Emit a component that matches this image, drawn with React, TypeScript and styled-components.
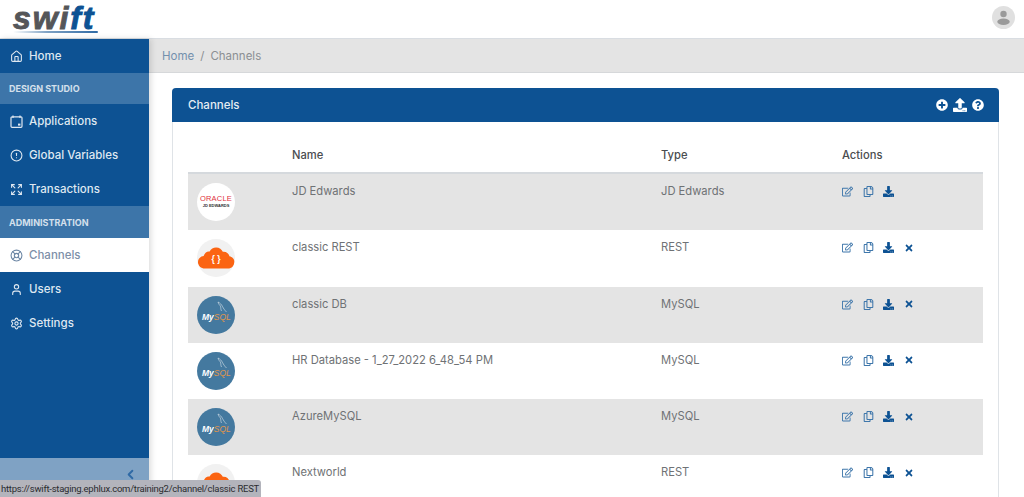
import React from 'react';
import styled, { createGlobalStyle } from 'styled-components';
import { Home, CircleAlert, Expand, LifeBuoy, User, Settings, ChevronLeft } from 'lucide-react';
import { FaRegEdit, FaRegCopy, FaDownload, FaTimes, FaPlusCircle, FaUpload, FaQuestionCircle } from 'react-icons/fa';

const GlobalStyle = createGlobalStyle`
  html, body {
    margin: 0;
    padding: 0;
    height: 100%;
    overflow: hidden;
    font-family: Inter, "Open Sans", sans-serif;
    background: #fff;
  }
  #root { height: 100%; }
`;

const Page = styled.div`
  position: relative;
  height: 497px;
  display: flex;
  flex-direction: column;
  overflow: hidden;
`;

const TopBar = styled.header`
  height: 38px;
  flex: none;
  display: flex;
  align-items: flex-start;
  justify-content: space-between;
  padding: 0 9px 0 13px;
  border-bottom: 1px solid #d9dde2;
  background: #fff;
`;

const Logo = styled.div`
  display: flex;
  flex-direction: column;
  width: 85px;
`;

const LogoText = styled.div`
  font-family: "Liberation Sans", Arial, sans-serif;
  font-weight: 700;
  font-style: italic;
  font-size: 32px;
  line-height: 36px;
  margin-bottom: -5px;
  letter-spacing: 1.9px;
  color: #555659;
  -webkit-text-stroke: 0.9px currentColor;
`;

const LogoAccent = styled.span`
  color: #0d5293;
`;

const LogoLine = styled.div`
  height: 2px;
  border-radius: 1px;
  background: linear-gradient(90deg, #ffffff, #7fa2c4 40%, #2f6aa5);
`;

const Avatar = styled.div`
  width: 23px;
  height: 23px;
  margin-top: 6px;
  border-radius: 50%;
  background: #e0e0e0;
  display: flex;
  align-items: center;
  justify-content: center;
`;

const Body = styled.div`
  flex: 1;
  min-height: 0;
  display: flex;
`;

const Sidebar = styled.nav`
  width: 149px;
  flex: none;
  display: flex;
  flex-direction: column;
  background: #0d5293;
  box-shadow: 2px 0 6px rgba(0, 0, 0, 0.14);
  z-index: 1;
`;

const NavItem = styled.div<{ $active?: boolean }>`
  height: 34px;
  flex: none;
  display: flex;
  align-items: center;
  gap: 6px;
  padding-left: 10px;
  font-size: 11.5px;
  font-weight: 500;
  color: ${(p) => (p.$active ? '#7d8fa8' : '#dfe8f1')};
  background: ${(p) => (p.$active ? '#fff' : 'transparent')};
  svg { color: ${(p) => (p.$active ? '#6d87a5' : '#dfe8f1')}; flex: none; }
`;

const NavSection = styled.div<{ $tall?: boolean }>`
  height: ${(p) => (p.$tall ? 32 : 31)}px;
  flex: none;
  display: flex;
  align-items: center;
  padding-left: 9px;
  font-size: 9px;
  font-weight: 700;
  color: #d5e0ec;
  background: #3d75a9;
`;

const SideFooter = styled.div`
  margin-top: auto;
  height: 39px;
  box-sizing: border-box;
  flex: none;
  display: flex;
  align-items: flex-start;
  justify-content: flex-end;
  padding: 9px 11px 0 0;
  background: #7fa2c4;
  color: #2f6aa5;
`;

const Main = styled.main`
  flex: 1;
  min-width: 0;
  display: flex;
  flex-direction: column;
`;

const Crumbs = styled.div`
  height: 33px;
  flex: none;
  display: flex;
  align-items: center;
  gap: 6px;
  padding-left: 13px;
  font-size: 11.5px;
  color: #8b8f93;
  background: #e4e4e4;
  border-bottom: 1px solid #d6d8da;
`;

const CrumbLink = styled.span`
  color: #7390ad;
`;

const Content = styled.div`
  flex: 1;
  min-height: 0;
  padding: 15px 25px 0 23px;
`;

const Card = styled.section`
  border: 1px solid #dfe3e7;
  border-top: none;
  border-radius: 4px 4px 0 0;
  background: #fff;
`;

const CardHead = styled.div`
  height: 34px;
  margin: 0 -1px;
  padding: 0 6px 0 16px;
  display: flex;
  align-items: center;
  justify-content: space-between;
  border-radius: 4px 4px 0 0;
  background: #0d5293;
  color: #e6edf4;
  font-size: 11.5px;
  font-weight: 500;
`;

const HeadIcons = styled.div`
  display: flex;
  align-items: center;
  gap: 5px;
  padding-right: 9px;
  color: #fff;
`;

const Table = styled.div`
  padding: 17px 15px 0;
`;

const HeadRow = styled.div`
  height: 35px;
  display: grid;
  grid-template-columns: 104px 369px 181px 1fr;
  align-items: start;
  padding-top: 9px;
  box-sizing: border-box;
  border-bottom: 2px solid #d5d9dd;
  font-size: 11.2px;
  font-weight: 500;
  color: #4a4d50;
`;

const Row = styled.div<{ $shaded: boolean }>`
  height: 56.3px;
  display: grid;
  grid-template-columns: 104px 369px 181px 1fr;
  align-items: start;
  background: ${(p) => (p.$shaded ? '#e4e4e4' : '#fff')};
  font-size: 11.2px;
  color: #6f7275;
`;

const LogoCell = styled.div`
  padding: 9px 0 0 9px;
`;

const TextCell = styled.div`
  padding-top: 10px;
`;

const Actions = styled.div`
  padding-top: 12px;
  display: flex;
  align-items: center;
  gap: 9.5px;
  color: #0d5293;
`;

const ActionSlot = styled.span<{ $muted?: boolean }>`
  display: flex;
  color: ${(p) => (p.$muted ? '#3f77ab' : '#0d5293')};
`;

const Badge = styled.div<{ $bg: string }>`
  position: relative;
  width: 38px;
  height: 38px;
  border-radius: 50%;
  overflow: hidden;
  background: ${(p) => p.$bg};
`;

const OracleBadge = styled(Badge)`
  display: flex;
  flex-direction: column;
  align-items: center;
  justify-content: center;
`;

const OracleName = styled.span`
  font-family: "Liberation Sans", sans-serif;
  font-size: 7.5px;
  line-height: 8px;
  font-weight: 400;
  letter-spacing: 0.2px;
  color: #e0303c;
`;

const OracleSub = styled.span`
  font-family: "Liberation Sans", sans-serif;
  font-size: 4px;
  line-height: 6px;
  font-weight: 700;
  color: #333;
`;

const MysqlLabel = styled.span`
  position: absolute;
  left: 5px;
  top: 16px;
  font-family: "Liberation Sans", sans-serif;
  font-size: 8.5px;
  font-weight: 700;
  font-style: italic;
  color: #fff;
`;

const MysqlAccent = styled.span`
  color: #e0954a;
  font-weight: 400;
`;

const Status = styled.div`
  position: absolute;
  left: 0;
  bottom: 0;
  z-index: 5;
  height: 17px;
  width: 261px;
  box-sizing: border-box;
  padding-left: 1px;
  display: flex;
  align-items: center;
  border-radius: 0 3px 0 0;
  background: #b3b4bc;
  font-family: Roboto, "Liberation Sans", sans-serif;
  font-size: 9.5px;
  letter-spacing: -0.25px;
  white-space: nowrap;
  color: #2b2c30;
`;

const ApplicationsIcon = () => (
  <svg width="13" height="13" viewBox="0 0 13 13" fill="none" stroke="currentColor" strokeWidth="1.2">
    <path d="M3 0.5v2.600M10 0.5v2.600" />
    <rect x="1" y="1.800" width="11" height="10.500" rx="1" />
    <rect x="8" y="8.600" width="2.400" height="2" fill="currentColor" stroke="none" />
  </svg>
);

const OracleLogo = () => (
  <OracleBadge $bg="#fff">
    <OracleName>ORACLE</OracleName>
    <OracleSub>JD EDWARDS</OracleSub>
  </OracleBadge>
);

const CloudLogo = () => (
  <Badge $bg="#f1f1f1">
    <svg width="38" height="38" viewBox="0 0 38 38">
      <path
        fill="#fb6412"
        d="M8 29.500c-4 0-7-2.700-7-6.300 0-3.300 2.500-5.800 5.700-6.100C7.400 13.800 10 12 12.600 12.500 14 9.800 16.500 8.300 19.300 8.400c3 .1 5.500 1.800 6.500 4.400 3.200-.5 6 1.500 6.600 4.500 2.800.4 5.100 2.900 5.100 5.900 0 3.500-2.900 6.300-6.600 6.300z"
      />
      <text x="19" y="23" textAnchor="middle" fontFamily="Liberation Sans, sans-serif" fontSize="8.500" fontWeight="700" fill="#fff">
        {'{ }'}
      </text>
    </svg>
  </Badge>
);

const MysqlLogo = () => (
  <Badge $bg="#44799f">
    <svg width="38" height="38" viewBox="0 0 38 38" fill="none" stroke="#dfe8ef" strokeWidth="0.6">
      <path d="M21 6c2 1 3.500 2.500 4.500 4.500 1 2 2 3.500 4 5.500M21 6c.5 2 1.500 3 2.500 4 .5 1.500 0 3 1 5" />
    </svg>
    <MysqlLabel>
      My<MysqlAccent>SQL</MysqlAccent>
    </MysqlLabel>
  </Badge>
);

type Channel = {
  name: string;
  type: string;
  logo: React.ReactNode;
  locked?: boolean;
};

const channels: Channel[] = [
  { name: 'JD Edwards', type: 'JD Edwards', logo: <OracleLogo />, locked: true },
  { name: 'classic REST', type: 'REST', logo: <CloudLogo /> },
  { name: 'classic DB', type: 'MySQL', logo: <MysqlLogo /> },
  { name: 'HR Database - 1_27_2022 6_48_54 PM', type: 'MySQL', logo: <MysqlLogo /> },
  { name: 'AzureMySQL', type: 'MySQL', logo: <MysqlLogo /> },
  { name: 'Nextworld', type: 'REST', logo: <CloudLogo /> },
];

function App() {
  return (
    <Page>
      <GlobalStyle />
      <TopBar>
        <Logo>
          <LogoText>
            swi<LogoAccent>ft</LogoAccent>
          </LogoText>
          <LogoLine />
        </Logo>
        <Avatar>
          <svg width="15" height="15" viewBox="0 0 15 15" fill="#9a9a9a">
            <circle cx="7.500" cy="4" r="3.200" />
            <ellipse cx="7.500" cy="11.700" rx="6.200" ry="3.200" />
          </svg>
        </Avatar>
      </TopBar>
      <Body>
        <Sidebar>
          <NavItem><Home size={13} />Home</NavItem>
          <NavSection>DESIGN STUDIO</NavSection>
          <NavItem><ApplicationsIcon />Applications</NavItem>
          <NavItem><CircleAlert size={13} />Global Variables</NavItem>
          <NavItem><Expand size={13} />Transactions</NavItem>
          <NavSection $tall>ADMINISTRATION</NavSection>
          <NavItem $active><LifeBuoy size={13} />Channels</NavItem>
          <NavItem><User size={13} />Users</NavItem>
          <NavItem><Settings size={13} />Settings</NavItem>
          <SideFooter><ChevronLeft size={15} strokeWidth={3} /></SideFooter>
        </Sidebar>
        <Main>
          <Crumbs>
            <CrumbLink>Home</CrumbLink>
            <span>/</span>
            <span>Channels</span>
          </Crumbs>
          <Content>
            <Card>
              <CardHead>
                Channels
                <HeadIcons>
                  <FaPlusCircle size={12} />
                  <FaUpload size={14} />
                  <FaQuestionCircle size={12} />
                </HeadIcons>
              </CardHead>
              <Table>
                <HeadRow>
                  <span />
                  <span>Name</span>
                  <span>Type</span>
                  <span>Actions</span>
                </HeadRow>
                {channels.map((channel, i) => (
                  <Row key={channel.name} $shaded={i % 2 === 0}>
                    <LogoCell>{channel.logo}</LogoCell>
                    <TextCell>{channel.name}</TextCell>
                    <TextCell>{channel.type}</TextCell>
                    <Actions>
                      <ActionSlot $muted><FaRegEdit size={11} /></ActionSlot>
                      <ActionSlot $muted><FaRegCopy size={11} /></ActionSlot>
                      <ActionSlot><FaDownload size={11} /></ActionSlot>
                      {!channel.locked && <ActionSlot><FaTimes size={10} /></ActionSlot>}
                    </Actions>
                  </Row>
                ))}
              </Table>
            </Card>
          </Content>
        </Main>
      </Body>
      <Status>https://swift-staging.ephlux.com/training2/channel/classic REST</Status>
    </Page>
  );
}

export default App;
